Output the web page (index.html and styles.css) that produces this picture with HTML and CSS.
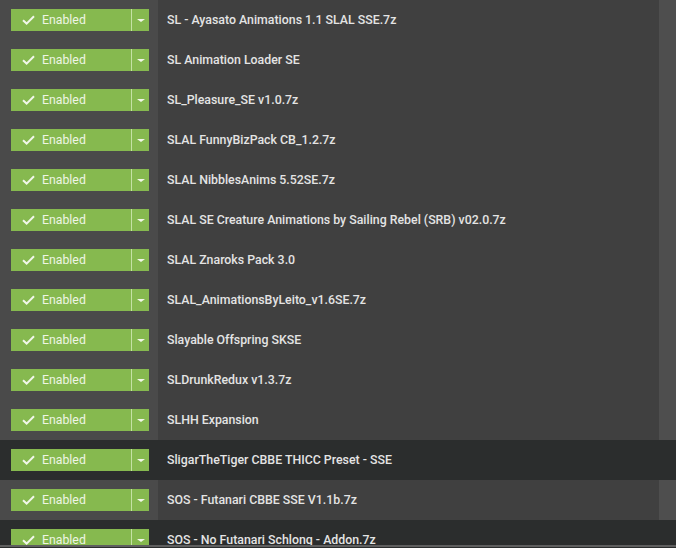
FILE: index.html
```html
<!DOCTYPE html>
<html>
<head>
<meta charset="utf-8">
<link rel="stylesheet" href="styles.css">
</head>
<body>
<div class="list">
  <div class="row"><div class="status"><div class="btn"><span class="main"><svg class="check" width="13" height="10" viewBox="0 0 13 10"><path d="M1 5.2 L4.6 8.6 L12 1.2" fill="none" stroke="#f2f7ea" stroke-width="2"/></svg>Enabled</span><span class="drop"><span class="caret"></span></span></div></div><div class="name">SL - Ayasato Animations 1.1 SLAL SSE.7z</div><div class="strip"></div></div>
  <div class="row"><div class="status"><div class="btn"><span class="main"><svg class="check" width="13" height="10" viewBox="0 0 13 10"><path d="M1 5.2 L4.6 8.6 L12 1.2" fill="none" stroke="#f2f7ea" stroke-width="2"/></svg>Enabled</span><span class="drop"><span class="caret"></span></span></div></div><div class="name">SL Animation Loader SE</div><div class="strip"></div></div>
  <div class="row"><div class="status"><div class="btn"><span class="main"><svg class="check" width="13" height="10" viewBox="0 0 13 10"><path d="M1 5.2 L4.6 8.6 L12 1.2" fill="none" stroke="#f2f7ea" stroke-width="2"/></svg>Enabled</span><span class="drop"><span class="caret"></span></span></div></div><div class="name">SL_Pleasure_SE v1.0.7z</div><div class="strip"></div></div>
  <div class="row"><div class="status"><div class="btn"><span class="main"><svg class="check" width="13" height="10" viewBox="0 0 13 10"><path d="M1 5.2 L4.6 8.6 L12 1.2" fill="none" stroke="#f2f7ea" stroke-width="2"/></svg>Enabled</span><span class="drop"><span class="caret"></span></span></div></div><div class="name">SLAL FunnyBizPack CB_1.2.7z</div><div class="strip"></div></div>
  <div class="row"><div class="status"><div class="btn"><span class="main"><svg class="check" width="13" height="10" viewBox="0 0 13 10"><path d="M1 5.2 L4.6 8.6 L12 1.2" fill="none" stroke="#f2f7ea" stroke-width="2"/></svg>Enabled</span><span class="drop"><span class="caret"></span></span></div></div><div class="name">SLAL NibblesAnims 5.52SE.7z</div><div class="strip"></div></div>
  <div class="row"><div class="status"><div class="btn"><span class="main"><svg class="check" width="13" height="10" viewBox="0 0 13 10"><path d="M1 5.2 L4.6 8.6 L12 1.2" fill="none" stroke="#f2f7ea" stroke-width="2"/></svg>Enabled</span><span class="drop"><span class="caret"></span></span></div></div><div class="name">SLAL SE Creature Animations by Sailing Rebel (SRB) v02.0.7z</div><div class="strip"></div></div>
  <div class="row"><div class="status"><div class="btn"><span class="main"><svg class="check" width="13" height="10" viewBox="0 0 13 10"><path d="M1 5.2 L4.6 8.6 L12 1.2" fill="none" stroke="#f2f7ea" stroke-width="2"/></svg>Enabled</span><span class="drop"><span class="caret"></span></span></div></div><div class="name">SLAL Znaroks Pack 3.0</div><div class="strip"></div></div>
  <div class="row"><div class="status"><div class="btn"><span class="main"><svg class="check" width="13" height="10" viewBox="0 0 13 10"><path d="M1 5.2 L4.6 8.6 L12 1.2" fill="none" stroke="#f2f7ea" stroke-width="2"/></svg>Enabled</span><span class="drop"><span class="caret"></span></span></div></div><div class="name">SLAL_AnimationsByLeito_v1.6SE.7z</div><div class="strip"></div></div>
  <div class="row"><div class="status"><div class="btn"><span class="main"><svg class="check" width="13" height="10" viewBox="0 0 13 10"><path d="M1 5.2 L4.6 8.6 L12 1.2" fill="none" stroke="#f2f7ea" stroke-width="2"/></svg>Enabled</span><span class="drop"><span class="caret"></span></span></div></div><div class="name">Slayable Offspring SKSE</div><div class="strip"></div></div>
  <div class="row"><div class="status"><div class="btn"><span class="main"><svg class="check" width="13" height="10" viewBox="0 0 13 10"><path d="M1 5.2 L4.6 8.6 L12 1.2" fill="none" stroke="#f2f7ea" stroke-width="2"/></svg>Enabled</span><span class="drop"><span class="caret"></span></span></div></div><div class="name">SLDrunkRedux v1.3.7z</div><div class="strip"></div></div>
  <div class="row"><div class="status"><div class="btn"><span class="main"><svg class="check" width="13" height="10" viewBox="0 0 13 10"><path d="M1 5.2 L4.6 8.6 L12 1.2" fill="none" stroke="#f2f7ea" stroke-width="2"/></svg>Enabled</span><span class="drop"><span class="caret"></span></span></div></div><div class="name">SLHH Expansion</div><div class="strip"></div></div>
  <div class="row dark"><div class="status"><div class="btn"><span class="main"><svg class="check" width="13" height="10" viewBox="0 0 13 10"><path d="M1 5.2 L4.6 8.6 L12 1.2" fill="none" stroke="#f2f7ea" stroke-width="2"/></svg>Enabled</span><span class="drop"><span class="caret"></span></span></div></div><div class="name">SligarTheTiger CBBE THICC Preset - SSE</div><div class="strip"></div></div>
  <div class="row"><div class="status"><div class="btn"><span class="main"><svg class="check" width="13" height="10" viewBox="0 0 13 10"><path d="M1 5.2 L4.6 8.6 L12 1.2" fill="none" stroke="#f2f7ea" stroke-width="2"/></svg>Enabled</span><span class="drop"><span class="caret"></span></span></div></div><div class="name">SOS - Futanari CBBE SSE V1.1b.7z</div><div class="strip"></div></div>
  <div class="row dark"><div class="status"><div class="btn"><span class="main"><svg class="check" width="13" height="10" viewBox="0 0 13 10"><path d="M1 5.2 L4.6 8.6 L12 1.2" fill="none" stroke="#f2f7ea" stroke-width="2"/></svg>Enabled</span><span class="drop"><span class="caret"></span></span></div></div><div class="name">SOS - No Futanari Schlong - Addon.7z</div><div class="strip"></div></div>
</div>
<div class="hbar"></div>
</body>
</html>
```

FILE: styles.css
```css
html, body {
  margin: 0;
  padding: 0;
  height: 548px;
  overflow: hidden;
  background: #2b2d2d;
  font-family: Roboto, "Liberation Sans", sans-serif;
}
.list {
  height: 545px;
  overflow: hidden;
}
.row {
  display: flex;
  height: 40px;
  background: #404040;
}
.status {
  width: 158px;
  flex: none;
  background: #4a4a4a;
  display: flex;
  align-items: center;
  padding-left: 11px;
  box-sizing: border-box;
}
.btn {
  display: flex;
  width: 138px;
  height: 22px;
  background: #86b94f;
}
.main {
  flex: 1;
  display: flex;
  align-items: center;
  padding-left: 11px;
  color: #eef5e4;
  font-size: 12.3px;
  border-right: 1px solid #c5e2a4;
}
.check {
  margin-right: 7px;
}
.drop {
  width: 17px;
  display: flex;
  align-items: center;
  justify-content: center;
}
.caret {
  width: 0;
  height: 0;
  border-left: 4px solid transparent;
  border-right: 4px solid transparent;
  border-top: 3px solid #f2f7ea;
}
.name {
  flex: 1;
  display: flex;
  align-items: center;
  padding-left: 9px;
  padding-bottom: 1px;
  color: #e4e4e4;
  font-size: 12.35px;
  font-weight: 500;
  white-space: nowrap;
}
.strip {
  width: 17px;
  flex: none;
  background: #4e4e4e;
}
.row.dark, .row.dark .status, .row.dark .strip {
  background: #2b2d2d;
}
.hbar {
  height: 2px;
  background: #5f5f5f;
}
```
